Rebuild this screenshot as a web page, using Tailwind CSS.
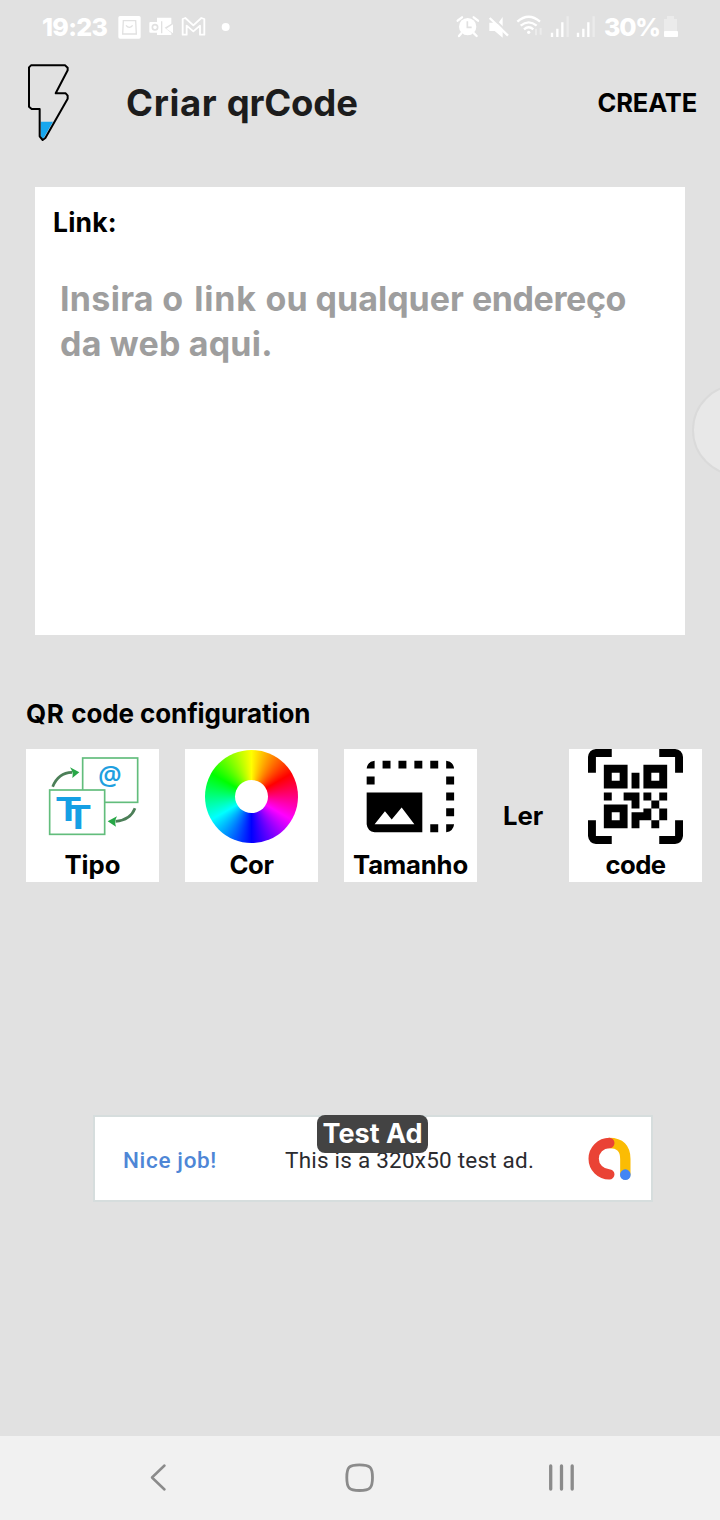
<!DOCTYPE html>
<html lang="pt">
<head>
<meta charset="utf-8">
<title>Criar qrCode</title>
<script src="https://cdn.jsdelivr.net/npm/@tailwindcss/browser@4"></script>
</head>
<body class="bg-[#e1e1e1]">
<div class="relative flex h-[1520px] w-[720px] flex-col overflow-hidden bg-[#e1e1e1] font-['Inter',sans-serif] font-bold text-black whitespace-nowrap">

  <!-- Status bar -->
  <div class="flex h-[54px] shrink-0 items-center justify-between pl-[42px] pr-[42px] text-white">
    <div class="flex items-center">
      <span class="w-[75px] text-[25px] leading-[54px] font-extrabold tracking-[-0.7px]">19:23</span>
      <svg class="h-[24px] w-[114px]" viewBox="350 45 342 72" fill="none">
        <rect x="354" y="48" width="67" height="68" rx="5" fill="#fff"/>
        <path d="M369 62h37l2 40h-41z" stroke="#e1e1e1" stroke-width="4"/>
        <path d="M377 76q10 12 20 0" stroke="#e1e1e1" stroke-width="4"/>
        <path d="M470 53h43v18l-20 12 20 16v6h-43z" fill="#fff"/>
        <path d="M498 86l20-13v27z" fill="#fff"/>
        <rect x="447" y="66" width="33" height="32" rx="3" fill="#fff"/>
        <circle cx="464" cy="82" r="8" stroke="#e1e1e1" stroke-width="5"/>
        <path d="M484 64v36" stroke="#e1e1e1" stroke-width="4"/>
        <path d="M547 104V57l8-3 24 22 24-22 9 3v47h-13V77l-20 17-20-17v27z" stroke="#fff" stroke-width="5.500" stroke-linejoin="round"/>
        <circle cx="676" cy="81" r="12" fill="#fff"/>
      </svg>
    </div>
    <div class="flex items-center">
      <svg class="h-[24px] w-[146px]" viewBox="45 45 438 72" fill="none">
        <circle cx="83" cy="80" r="26" fill="#fff"/>
        <path d="M53 62l13-10M101 52l13 10M64 100l-7 8M102 100l8 8" stroke="#fff" stroke-width="7" stroke-linecap="round"/>
        <path d="M82 64v18h13" stroke="#e1e1e1" stroke-width="5"/>
        <path d="M148 68h14l8 8 18-25v62l-24-20h-16z" fill="#fff"/>
        <path d="M153 48l57 56" stroke="#e1e1e1" stroke-width="6"/>
        <path d="M149 54l55 53" stroke="#fff" stroke-width="7"/>
        <path d="M232 65q34-29 68 0M242 77q24-20 48 0M252 88q14-12 28 0" stroke="#fff" stroke-width="7"/>
        <circle cx="266" cy="97" r="5" fill="#fff"/>
        <path d="M288 106V86M302 84v20" stroke="#ececec" stroke-width="6"/>
        <path d="M336 111V98M352 111V86M367 111V67M414 111V98M430 111V86M445 111V67" stroke="#fff" stroke-width="7"/>
        <path d="M383 111V49M461 111V49" stroke="#ebebeb" stroke-width="7"/>
      </svg>
      <span class="ml-[3px] w-[59px] text-[25px] leading-[54px] font-extrabold tracking-[-1.2px]">30%</span>
      <svg class="h-[22px] w-[15px]" viewBox="0 0 15 22"><path d="M4 0h7v3h3v13H1V3h3z" fill="#ebebeb"/><rect x="1" y="15" width="14" height="6" rx="1" fill="#fff"/></svg>
    </div>
  </div>

  <!-- App bar -->
  <header class="flex h-[97px] shrink-0 items-center pl-[15px] pr-[23px]">
    <svg class="h-[95px] w-[70px]" viewBox="0 0 210 285" fill="none">
      <path d="M77 200h37l-26 46-5 6-6-9z" fill="#18a7ee"/>
      <path d="M48 31H150l8 7v8l-36 69h30l6 7v9L91 249l-8 6-9-11V162H50l-8-7V37z" stroke="#000" stroke-width="6" stroke-linejoin="round"/>
    </svg>
    <h1 class="ml-[41px] flex-1 text-[36.500px] leading-[44px] text-[#1c1c1c]"><span class="tracking-[0.65px]">Criar </span><span class="tracking-[-0.15px]">qrCode</span></h1>
    <span class="text-[25.500px] leading-[32px] tracking-[-0.15px]">CREATE</span>
  </header>

  <!-- Link input -->
  <section class="mx-[35px] mt-[36px] flex h-[448px] shrink-0 flex-col bg-white pt-[19px]">
    <label class="pl-[18px] text-[26.500px] leading-[32px] tracking-[0.2px]">Link:</label>
    <p class="mt-[38px] pl-[25px] text-[34px] leading-[45px] text-[#9e9e9e]"><span class="tracking-[0.3px]">Insira </span><span class="tracking-[1.5px]">o </span><span class="tracking-[0.8px]">link </span><span>ou </span><span>qualquer </span><span class="tracking-[-0.4px]">endereço</span><br><span class="tracking-[0.2px]">da web aqui.</span></p>
  </section>

  <!-- QR code settings -->
  <h2 class="mt-[63px] shrink-0 pl-[26px] text-[26px] leading-[32px]"><span class="tracking-[0.6px]">QR </span><span class="tracking-[-0.1px]">code </span><span class="tracking-[-0.1px]">configuration</span></h2>
  <div class="mt-[19px] flex h-[133px] shrink-0 items-center pl-[26px] text-[25.700px]">
    <div class="flex size-[133px] flex-col items-center bg-white">
      <svg class="h-[100px] w-[133px]" viewBox="18 27 399 300" fill="none">
        <rect x="188" y="54" width="165" height="133" stroke="#62bd7c" stroke-width="5"/>
        <rect x="89" y="150" width="165" height="133" fill="#fff" stroke="#62bd7c" stroke-width="5"/>
        <path d="M98 140q17-42 58-43" stroke="#4c7f58" stroke-width="8"/>
        <path d="M150 82l28 15-21 17q4-16-7-32z" fill="#27a747"/>
        <path d="M345 205q-14 36-58 39" stroke="#4c7f58" stroke-width="8"/>
        <path d="M291 229l-28 15 25 16q-6-15 3-31z" fill="#27a747"/>
        <text x="234" y="135" textLength="71" lengthAdjust="spacingAndGlyphs" font-family="Open Sans" font-weight="600" font-size="80" fill="#219fdf">@</text>
        <text x="108" y="244" textLength="75" lengthAdjust="spacingAndGlyphs" font-family="Liberation Sans" font-weight="700" font-size="107" fill="#159fe4">T</text>
        <text x="137" y="267" textLength="75" lengthAdjust="spacingAndGlyphs" font-family="Liberation Sans" font-weight="700" font-size="104" fill="#159fe4">T</text>
      </svg>
      <span class="leading-[32px]">Tipo</span>
    </div>
    <div class="ml-[26px] flex size-[133px] flex-col items-center bg-white">
      <div class="mt-px mb-[6px] flex size-[93px] items-center justify-center rounded-full bg-[conic-gradient(#ff0,#f00,#f0f,#00f,#0ff,#0f0,#ff0)]">
        <div class="size-[33px] rounded-full bg-white"></div>
      </div>
      <span class="leading-[32px] tracking-[-0.4px]">Cor</span>
    </div>
    <div class="ml-[26px] flex size-[133px] flex-col items-center bg-white">
      <svg class="h-[100px] w-[133px]" viewBox="27 27 399 300">
        <g transform="translate(95 62) scale(23.850)">
          <path d="M1 0v1H0Q.1.1 1 0zM2 0h1v1H2zM4 0h1v1H4zM6 0h1v1H6zM8 0h1v1H8zM10 0q.9.1 1 1h-1zM0 2h1v1H0zM10 2h1v1h-1zM10 4h1v1h-1zM10 6h1v1h-1zM8 8h1v1H8zM10 8h1q-.1.900-1 1zM0 4h7v5H1Q.1 8.900 0 8z"/>
          <path d="M1 8l1.300-1.650.85 1.050L4.400 5.900 6 8z" fill="#fff"/>
        </g>
      </svg>
      <span class="leading-[32px] tracking-[-0.2px]">Tamanho</span>
    </div>
    <span class="ml-[26px] w-[66px] leading-[32px]">Ler</span>
    <div class="flex size-[133px] flex-col items-center bg-white">
      <svg class="h-[100px] w-[133px]" viewBox="27 27 399 300">
        <g transform="translate(84 27) scale(23.750)">
          <path d="M0 3V1Q.1.1 1 0H3V1H1V3zM9 0h2q.9.1 1 1V3H11V1H9zM0 9H1v2H3v1H1Q.1 11.900 0 11zM11 9h1v2q-.1.900-1 1H9V11h2z"/>
          <path fill-rule="evenodd" d="M2 2h3v3H2zM3 3v1h1V3zM7 2h3v3H7zM8 3v1h1V3zM2 7h3v3H2zM3 8v1h1V8z"/>
          <path d="M5.500 3h1v2h-1zM2 5.500h1v1H2zM4.500 5.500h2v2h-1v-1h-1zM7 5.500h1v1H7zM9 5.500h1v1H9zM8 6.500h1v1H8zM9 7.500h1V9H9zM8 9h1v1H8zM5.500 8H7v-.5h1V9H6.500v1h-1z"/>
        </g>
      </svg>
      <span class="leading-[32px] tracking-[-0.6px]">code</span>
    </div>
  </div>

  <!-- Banner ad -->
  <div class="relative mt-[233px] ml-[93px] flex h-[87px] w-[560px] shrink-0 items-center border-2 border-[#d6dddd] bg-white pl-[28px] font-['Roboto',sans-serif] text-[22.500px] font-normal">
    <span class="mt-[4px] w-[162px] font-medium tracking-[0.65px] text-[#4e86d6]">Nice job!</span>
    <span class="mt-[4px] w-[302px] tracking-[0.22px] text-[#2b2b2f]">This is a 320x50 test ad.</span>
    <svg class="mt-px h-[44px] w-[46px]" viewBox="680 96 138 132" fill="none" stroke-linecap="round" stroke-width="31">
      <path d="M747 114q48 0 48 48v46" stroke="#fbbc04"/>
      <path d="M747 114a47 47 0 1 0 0 94" stroke="#ea4335"/>
      <circle cx="795" cy="209" r="16" fill="#4285f4"/>
    </svg>
    <div class="absolute -top-[2px] left-[222px] flex h-[38px] w-[111px] items-center justify-center rounded-[8px] bg-[#434343] font-['Inter',sans-serif] text-[27px] font-bold text-white">Test Ad</div>
  </div>

  <!-- Edge panel handle -->
  <div class="absolute top-[384px] left-[692px] size-[92px] rounded-full border-2 border-[#dadada] bg-[#e8e8e8]"></div>

  <!-- Navigation bar -->
  <nav class="mt-auto flex h-[84px] shrink-0 items-center bg-[#f1f1f1] pl-[150px]">
    <svg class="h-[30px] w-[17px]" viewBox="0 0 17 30" fill="none" stroke="#8b8b8b" stroke-width="2.500" stroke-linecap="round" stroke-linejoin="round"><path d="M14.500 2.500L2 14.500l12.500 12"/></svg>
    <svg class="ml-[177px] h-[30px] w-[30px]" viewBox="0 0 30 30" fill="none" stroke="#8b8b8b" stroke-width="2.800"><path d="M15.500 1.800C26 1.800 28.500 4 28.500 14.500S26 27.500 15.500 27.500 2.800 25 2.800 14.500 5 1.800 15.500 1.800z"/></svg>
    <svg class="ml-[173px] h-[30px] w-[30px]" viewBox="0 0 30 30" stroke="#8b8b8b" stroke-width="3.300" stroke-linecap="round"><path d="M3.700 3v23M14.500 3v23M25.200 3v23"/></svg>
  </nav>
</div>
</body>
</html>
